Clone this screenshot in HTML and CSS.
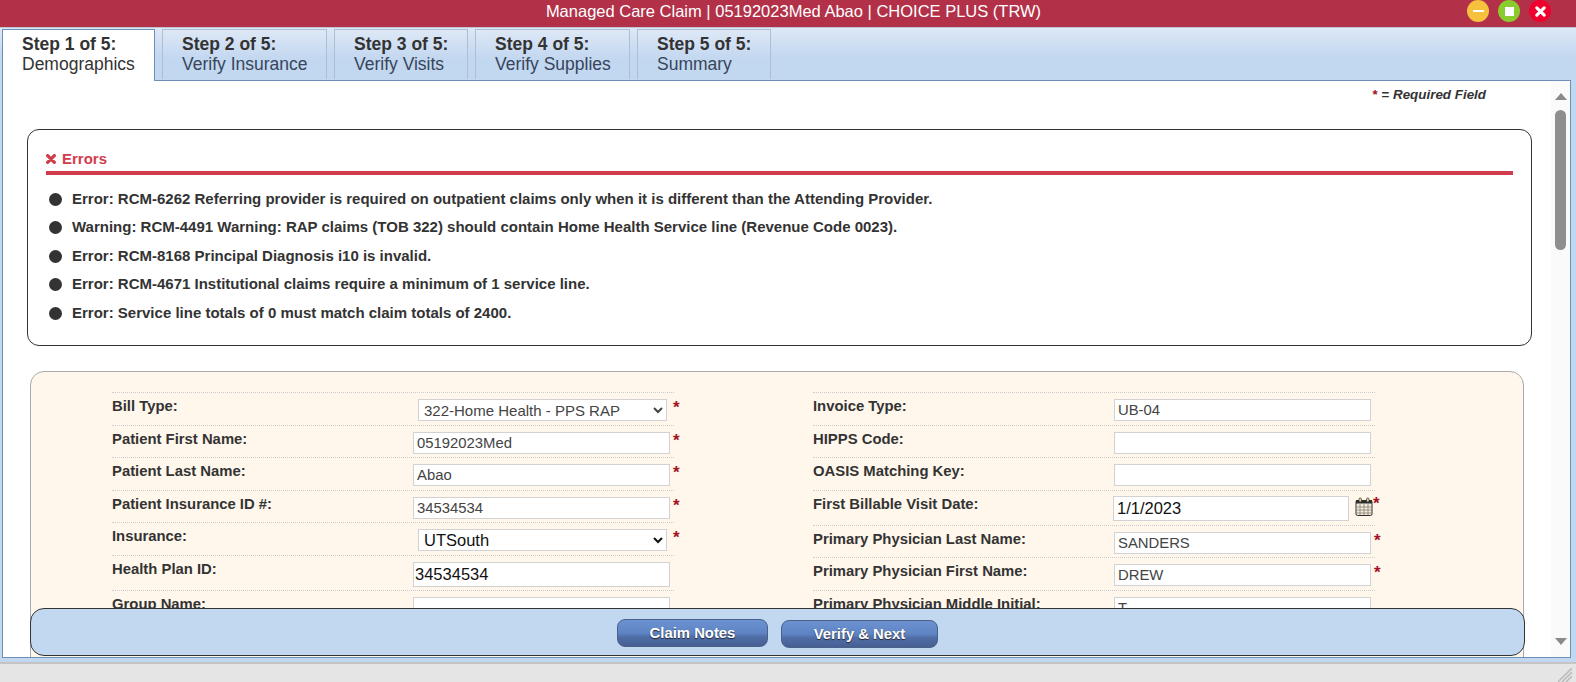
FILE: index.html
```html
<!DOCTYPE html>
<html lang="en">
<head>
<meta charset="utf-8">
<title>Managed Care Claim</title>
<link rel="stylesheet" href="styles.css">
</head>
<body>
<header class="titlebar">
  <div class="title">Managed Care Claim | 05192023Med Abao | CHOICE PLUS (TRW)</div>
  <div class="controls">
    <span class="ctl ctl-min"><i class="bar"></i></span>
    <span class="ctl ctl-max"><i class="sq"></i></span>
    <span class="ctl ctl-close"><svg viewBox="0 0 12 12" width="11" height="11"><path d="M2 2l8 8M10 2l-8 8" stroke="#fff" stroke-width="3.4" stroke-linecap="round"/></svg></span>
  </div>
</header>
<nav class="tabs">
  <a class="tab active"><b>Step 1 of 5:</b><span>Demographics</span></a>
  <a class="tab"><b>Step 2 of 5:</b><span>Verify Insurance</span></a>
  <a class="tab"><b>Step 3 of 5:</b><span>Verify Visits</span></a>
  <a class="tab"><b>Step 4 of 5:</b><span>Verify Supplies</span></a>
  <a class="tab"><b>Step 5 of 5:</b><span>Summary</span></a>
</nav>
<main class="panel">
  <div class="scrollarea">
    <p class="note"><span class="req">*</span> = <em>Required Field</em></p>
    <section class="errors">
      <h2 class="errors-head"><svg viewBox="0 0 12 12" width="10" height="10"><path d="M2 2l8 8M10 2l-8 8" stroke="#d13c4c" stroke-width="4" stroke-linecap="round"/></svg>Errors</h2>
      <ul class="error-list">
        <li>Error: RCM-6262 Referring provider is required on outpatient claims only when it is different than the Attending Provider.</li>
        <li>Warning: RCM-4491 Warning: RAP claims (TOB 322) should contain Home Health Service line (Revenue Code 0023).</li>
        <li>Error: RCM-8168 Principal Diagnosis i10 is invalid.</li>
        <li>Error: RCM-4671 Institutional claims require a minimum of 1 service line.</li>
        <li>Error: Service line totals of 0 must match claim totals of 2400.</li>
      </ul>
    </section>
    <section class="card">
      <div class="col col-left">
        <div class="row"><label>Bill Type:</label><select class="sel"><option>322-Home Health - PPS RAP</option></select><span class="req">*</span></div>
        <div class="row"><label>Patient First Name:</label><input class="inp" value="05192023Med"><span class="req">*</span></div>
        <div class="row"><label>Patient Last Name:</label><input class="inp" value="Abao"><span class="req">*</span></div>
        <div class="row"><label>Patient Insurance ID #:</label><input class="inp" value="34534534"><span class="req">*</span></div>
        <div class="row"><label>Insurance:</label><select class="sel big"><option>UTSouth</option></select><span class="req">*</span></div>
        <div class="row tall"><label>Health Plan ID:</label><input class="inp big" value="34534534"></div>
        <div class="row"><label>Group Name:</label><input class="inp" value=""></div>
        <div class="row"><label>Group Number:</label><input class="inp" value=""></div>
      </div>
      <div class="col col-right">
        <div class="row"><label>Invoice Type:</label><input class="inp" value="UB-04"></div>
        <div class="row"><label>HIPPS Code:</label><input class="inp" value=""></div>
        <div class="row"><label>OASIS Matching Key:</label><input class="inp" value=""></div>
        <div class="row date"><label>First Billable Visit Date:</label><input class="inp big dateinp" value="1/1/2023">
          <svg class="cal" viewBox="0 0 18 19" width="18" height="19"><rect x="1" y="3.5" width="16" height="15" rx="1.5" fill="#f0ece0" stroke="#2e2e2e"/><rect x="1" y="3" width="16" height="3.5" fill="#2e2e2e"/><rect x="4" y="1" width="2.4" height="4" rx="1" fill="#f3d9a0" stroke="#2e2e2e" stroke-width=".7"/><rect x="11.6" y="1" width="2.4" height="4" rx="1" fill="#f3d9a0" stroke="#2e2e2e" stroke-width=".7"/><path d="M5 7v11M9 7v11M13 7v11M1.5 10h15M1.5 13h15M1.5 16h15" stroke="#8a7f6a" stroke-width=".8"/></svg><span class="req">*</span></div>
        <div class="row"><label>Primary Physician Last Name:</label><input class="inp" value="SANDERS"><span class="req">*</span></div>
        <div class="row"><label>Primary Physician First Name:</label><input class="inp" value="DREW"><span class="req">*</span></div>
        <div class="row"><label>Primary Physician Middle Initial:</label><input class="inp" value="T"></div>
      </div>
    </section>
  </div>
  <div class="scrollbar">
    <i class="arrow up"></i>
    <div class="track"><i class="thumb"></i></div>
    <i class="arrow down"></i>
  </div>
  <div class="actions">
    <button class="btn">Claim Notes</button>
    <button class="btn btn-next">Verify &amp; Next</button>
  </div>
</main>
<footer class="status">
  <svg class="grip" viewBox="0 0 14 14" width="14" height="14"><path d="M14 0L0 14M14 4L4 14M14 8L8 14" stroke="#bdbdbd" stroke-width="1.6"/></svg>
</footer>
</body>
</html>
```

FILE: styles.css
```css
* { box-sizing: border-box; }
html, body { height: 682px; margin: 0; overflow: hidden; }
body {
  display: flex;
  flex-direction: column;
  background: #c2d7f0;
  font-family: "Liberation Sans", Arial, sans-serif;
  color: #333;
}
.titlebar {
  height: 28px;
  flex: none;
  display: flex;
  align-items: flex-start;
  background: #b23149;
  border-bottom: 1px solid #bcc6d2;
}
.title {
  flex: 1;
  padding-left: 120px;
  text-align: center;
  color: #fff;
  font-size: 16.5px;
  line-height: 23px;
}
.controls { display: flex; gap: 9px; margin-right: 25px; }
.ctl {
  width: 22px;
  height: 22px;
  border-radius: 50%;
  display: flex;
  align-items: center;
  justify-content: center;
}
.ctl-min { background: #f6c23e; }
.ctl-max { background: #8acb2e; }
.ctl-close { background: #f0002e; }
.bar { width: 11px; height: 2px; background: #fff; }
.sq { width: 9px; height: 9px; background: #fff; }
.tabs {
  flex: none;
  height: 52px;
  padding: 1px 0 0 2px;
  display: flex;
  gap: 7px;
  background: linear-gradient(#dee8f6, #c2d7f0 55%);
  position: relative;
  z-index: 1;
}
.tab {
  display: flex;
  flex-direction: column;
  padding: 4px 19px 0;
  font-size: 17.5px;
  line-height: 20px;
  white-space: nowrap;
  color: #38455a;
  background: linear-gradient(#dee8f6, #c2d7f0 60%);
  border: 1px solid #aebfd3;
  border-bottom: 0;
  margin-bottom: 1px;
}
.tab b { color: #333; }
.tab.active {
  width: 153px;
  background: #fff;
  border: 1px solid #6d90b9;
  border-bottom: 0;
  margin-bottom: -1px;
  color: #333;
}
.tab:nth-child(2) { width: 165px; }
.tab:nth-child(3) { width: 134px; }
.tab:nth-child(4) { width: 155px; }
.tab:nth-child(5) { width: 134px; }
.panel {
  flex: none;
  width: 1569px;
  height: 578px;
  margin-left: 2px;
  display: flex;
  position: relative;
  background: #fff;
  border: 1px solid #6d90b9;
  overflow: hidden;
}
.scrollarea { flex: 1; min-width: 0; overflow: hidden; padding: 0 0 0 24px; }
.note {
  height: 14px;
  margin: 7px 0 0;
  padding-right: 65px;
  text-align: right;
  font-size: 13.4px;
  line-height: 14px;
  font-weight: bold;
}
.note em { font-style: italic; }
.req { color: #a50f1e; font-weight: bold; font-size: 17px; line-height: 14px; }
.note .req { font-size: 13.4px; }
.errors {
  width: 1505px;
  height: 217px;
  margin-top: 27px;
  padding: 21px 18px 0;
  background: #fff;
  border: 1px solid #333;
  border-radius: 12px;
}
.errors-head {
  display: flex;
  align-items: center;
  gap: 6px;
  margin: 0;
  height: 24px;
  padding-bottom: 5px;
  border-bottom: 4px solid #d13c4c;
  color: #d13c4c;
  font-size: 15px;
  font-weight: bold;
  line-height: 16px;
}
.error-list {
  list-style: none;
  margin: 10px 0 0;
  padding: 0;
}
.error-list li {
  position: relative;
  padding-left: 26px;
  height: 28.4px;
  line-height: 28px;
  font-size: 15px;
  font-weight: bold;
  color: #333;
}
.error-list li::before {
  content: "";
  position: absolute;
  left: 3px;
  top: 8px;
  width: 13px;
  height: 13px;
  border-radius: 50%;
  background: #333;
}
.card {
  width: 1494px;
  height: 320px;
  margin: 25px 0 0 3px;
  padding: 20px 0 0 81px;
  display: flex;
  gap: 139px;
  background: #fff7ec;
  border: 1px solid #aaa;
  border-radius: 14px;
}
.col { width: 562px; flex: none; border-top: 1px dotted #ccc; }
.row {
  display: flex;
  align-items: flex-start;
  height: 32.5px;
  padding-top: 5px;
  border-bottom: 1px dotted #ccc;
  font-size: 14.85px;
}
.row label {
  width: 301px;
  flex: none;
  font-weight: bold;
  line-height: 16px;
  color: #333;
}
.inp, .sel {
  width: 257px;
  height: 22px;
  flex: none;
  margin-top: 1px;
  padding: 0 3px;
  border: 1px solid #d2d2d2;
  background: #fff;
  color: #444;
  font: 14.85px "Liberation Sans", Arial, sans-serif;
  border-radius: 0;
}
.sel { width: 249px; margin-left: 5px; margin-right: 3px; padding: 0 0 0 1px; font-size: 15px; }
.inp.big, .sel.big { font-size: 16.5px; color: #111; }
.row.tall { height: 35.5px; }
.row.tall .inp { height: 25px; padding-left: 1px; }
.row .req { margin: 3px 0 0 3px; }
.row.date { height: 35px; }
.dateinp { width: 236px; height: 25px; margin-top: 0; margin-left: -1px; }
.cal { margin: 1px 0 0 6px; flex: none; }
.row.date .req { margin-left: 0; margin-top: 1px; }
.scrollbar {
  width: 19px;
  flex: none;
  display: flex;
  flex-direction: column;
  align-items: center;
  background: #fafafa;
}
.arrow { flex: none; width: 0; height: 0; border-left: 6.5px solid transparent; border-right: 6.5px solid transparent; }
.arrow.up { margin-top: 12px; border-bottom: 7px solid #8a8a8a; }
.arrow.down { margin-bottom: 12px; border-top: 7px solid #8a8a8a; }
.track { flex: 1; width: 100%; display: flex; justify-content: center; padding-top: 10px; }
.thumb { width: 11px; height: 140px; border-radius: 6px; background: #8e8e8e; }
.actions {
  position: absolute;
  left: 27px;
  right: 45px;
  top: 527px;
  height: 48px;
  display: flex;
  justify-content: center;
  gap: 13px;
  padding: 10px 0 0;
  background: #c2d7f0;
  border: 1px solid #333;
  border-radius: 14px;
}
.btn {
  width: 151px;
  height: 28px;
  border: 1px solid #4a6088;
  border-radius: 8px;
  background: linear-gradient(#6c92d2, #5f84c4 50%, #4f6ea6 65%, #465f93);
  color: #fff;
  font: bold 14.85px "Liberation Sans", Arial, sans-serif;
  text-shadow: 0 1px 1px #223;
}
.btn-next { width: 157px; margin-top: 1px; }
.status {
  flex: none;
  height: 20px;
  margin-top: 4px;
  background: #e5e5e5;
  border-top: 2px solid #c4c4c4;
  display: flex;
  justify-content: flex-end;
  align-items: flex-end;
  padding: 0 4px 0 0;
}
```
